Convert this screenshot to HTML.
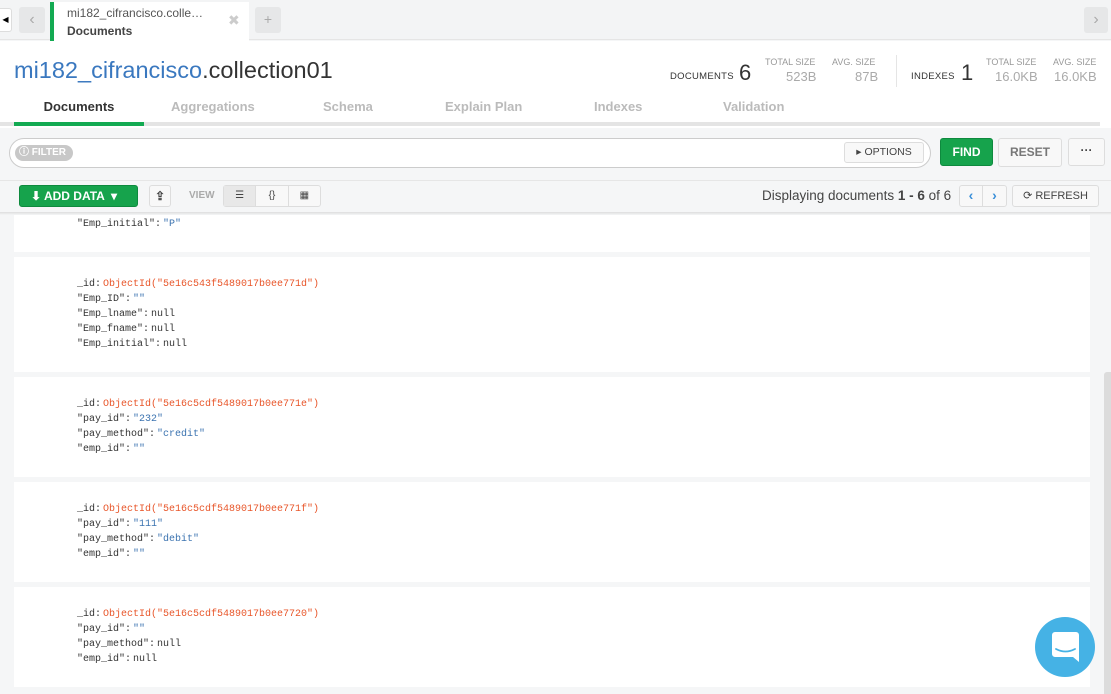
<!DOCTYPE html><html><head><style>
*{box-sizing:border-box;margin:0;padding:0}
body{width:1111px;height:694px;overflow:hidden;background:#f5f6f7;font-family:"Liberation Sans",sans-serif;position:relative}
.a{position:absolute}
.mono{font-family:"Liberation Mono",monospace;font-size:10px;color:#333;line-height:15px}
.mono i{font-style:normal;margin-right:2px}
.card{position:absolute;left:14px;width:1076px;background:#fff}
.s{color:#3b73b0}.o{color:#e8562a}
.btn{position:absolute;border:1px solid #ddd;border-radius:3px;background:#f8f8f8;font-size:12px;font-weight:bold;color:#777;text-align:center}
</style></head><body>
<div class="a" style="left:0;top:0;width:1111px;height:40px;background:#f3f4f5;border-bottom:1px solid #e5e5e5"></div>
<div class="a" style="left:0;top:8px;width:12px;height:24px;background:#fff;border:1px solid #ddd;border-left:none;border-radius:0 3px 3px 0;font-size:8px;line-height:22px;text-align:center">◀</div>
<div class="a" style="left:19px;top:7px;width:26px;height:26px;background:#e6e7e8;border-radius:3px;color:#aaa;text-align:center;line-height:26px;font-size:16px">‹</div>
<div class="a" style="left:50px;top:2px;width:199px;height:39px;background:#fff;border-left:4px solid #13aa52">
 <div class="a" style="left:13px;top:4px;font-size:12px;color:#555">mi182_cifrancisco.colle…</div>
 <div class="a" style="left:13px;top:22px;font-size:12px;font-weight:bold;color:#444">Documents</div>
 <div class="a" style="left:174px;top:10px;font-size:14px;color:#ccc">✖</div>
</div>
<div class="a" style="left:255px;top:7px;width:26px;height:26px;background:#e6e7e8;border-radius:3px;color:#aaa;text-align:center;line-height:24px;font-size:14px">+</div>
<div class="a" style="left:1084px;top:7px;width:24px;height:26px;background:#e6e7e8;border-radius:3px;color:#aaa;text-align:center;line-height:26px;font-size:16px">›</div>
<div class="a" style="left:0;top:41px;width:1111px;height:87px;background:#fff"></div>
<div class="a" style="left:14px;top:57px;font-size:23.5px;color:#333"><span style="color:#3a78bf">mi182_cifrancisco</span>.collection01</div>
<div class="a" style="left:670px;top:71px;font-size:9.5px;color:#333;letter-spacing:.3px">DOCUMENTS</div>
<div class="a" style="left:739px;top:60px;font-size:22px;color:#333">6</div>
<div class="a" style="left:765px;top:57px;font-size:9px;color:#999">TOTAL SIZE</div>
<div class="a" style="left:786px;top:69px;font-size:13px;color:#aaa">523B</div>
<div class="a" style="left:832px;top:57px;font-size:9px;color:#999">AVG. SIZE</div>
<div class="a" style="left:855px;top:69px;font-size:13px;color:#aaa">87B</div>
<div class="a" style="left:896px;top:55px;width:1px;height:32px;background:#e5e5e5"></div>
<div class="a" style="left:911px;top:71px;font-size:9.5px;color:#333;letter-spacing:.3px">INDEXES</div>
<div class="a" style="left:961px;top:60px;font-size:22px;color:#333">1</div>
<div class="a" style="left:986px;top:57px;font-size:9px;color:#999">TOTAL SIZE</div>
<div class="a" style="left:995px;top:69px;font-size:13px;color:#aaa">16.0KB</div>
<div class="a" style="left:1053px;top:57px;font-size:9px;color:#999">AVG. SIZE</div>
<div class="a" style="left:1054px;top:69px;font-size:13px;color:#aaa">16.0KB</div>
<div class="a" style="left:14px;top:99px;width:130px;text-align:center;font-size:13px;font-weight:bold;color:#333">Documents</div>
<div class="a" style="left:171px;top:99px;font-size:13px;font-weight:bold;color:#bbb">Aggregations</div>
<div class="a" style="left:323px;top:99px;font-size:13px;font-weight:bold;color:#bbb">Schema</div>
<div class="a" style="left:445px;top:99px;font-size:13px;font-weight:bold;color:#bbb">Explain Plan</div>
<div class="a" style="left:594px;top:99px;font-size:13px;font-weight:bold;color:#bbb">Indexes</div>
<div class="a" style="left:723px;top:99px;font-size:13px;font-weight:bold;color:#bbb">Validation</div>
<div class="a" style="left:0;top:122px;width:1100px;height:4px;background:#e4e4e4"></div>
<div class="a" style="left:14px;top:122px;width:130px;height:4px;background:#13aa52"></div>
<div class="a" style="left:9px;top:138px;width:922px;height:30px;background:#fff;border:1px solid #ccc;border-radius:15px"></div>
<div class="a" style="left:15px;top:145px;width:58px;height:16px;background:#c8c8c8;border-radius:8px;color:#fff;font-size:10px;font-weight:bold;line-height:16px;padding-left:4px">ⓘ FILTER</div>
<div class="a" style="left:844px;top:142px;width:80px;height:21px;background:#f8f8f8;border:1px solid #ddd;border-radius:3px;font-size:10.5px;color:#444;line-height:19px;text-align:center">▸ OPTIONS</div>
<div class="a" style="left:940px;top:138px;width:53px;height:28px;background:#16a34c;border:1px solid #0e8a3e;border-radius:3px;color:#fff;font-size:12px;font-weight:bold;text-align:center;line-height:26px">FIND</div>
<div class="btn" style="left:998px;top:138px;width:64px;height:29px;line-height:27px">RESET</div>
<div class="btn" style="left:1068px;top:138px;width:37px;height:28px;line-height:22px;color:#444">···</div>
<div class="a" style="left:0;top:180px;width:1111px;height:1px;background:#e6e6e6"></div>
<div class="a" style="left:19px;top:185px;width:119px;height:22px;background:#16a34c;border:1px solid #0e8a3e;border-radius:3px;color:#fff;font-size:12px;font-weight:bold;line-height:20px;padding-left:11px">⬇ ADD DATA &nbsp;▾</div>
<div class="btn" style="left:149px;top:185px;width:22px;height:22px;line-height:20px;color:#444">⇪</div>
<div class="a" style="left:189px;top:190px;font-size:10px;font-weight:bold;color:#aaa">VIEW</div>
<div class="a" style="left:223px;top:185px;width:98px;height:22px;border:1px solid #ddd;border-radius:3px;background:#f8f8f8;display:flex;font-size:10px;color:#444;text-align:center;line-height:20px">
 <div style="width:33px;background:#e8e8e8;border-right:1px solid #ddd">☰</div><div style="width:33px;border-right:1px solid #ddd">{}</div><div style="width:32px">▦</div></div>
<div class="a" style="left:762px;top:188px;font-size:13.5px;color:#444">Displaying documents <b>1 - 6</b> of 6</div>
<div class="a" style="left:959px;top:185px;width:48px;height:22px;border:1px solid #ddd;border-radius:3px;background:#f8f8f8;display:flex;color:#3a8fd8;font-weight:bold;font-size:14px;line-height:19px;text-align:center"><div style="width:24px;border-right:1px solid #ddd">‹</div><div style="width:24px">›</div></div>
<div class="btn" style="left:1012px;top:185px;width:87px;height:22px;line-height:20px;color:#444;font-size:11px;font-weight:normal">⟳ REFRESH</div>
<div class="a" style="left:0;top:212px;width:1111px;height:3px;background:linear-gradient(#ddd,#f5f6f7)"></div>
<div class="card" style="top:215px;height:37px"><div class="a mono" style="left:63px;top:2px"><i>"Emp_initial":</i><span class="s">"P"</span></div></div>
<div class="card" style="top:257px;height:115px"><div class="a mono" style="left:63px;top:20px"><i>_id:</i><span class="o">ObjectId("5e16c543f5489017b0ee771d")</span><br><i>"Emp_ID":</i><span class="s">""</span><br><i>"Emp_lname":</i>null<br><i>"Emp_fname":</i>null<br><i>"Emp_initial":</i>null</div></div>
<div class="card" style="top:377px;height:100px"><div class="a mono" style="left:63px;top:20px"><i>_id:</i><span class="o">ObjectId("5e16c5cdf5489017b0ee771e")</span><br><i>"pay_id":</i><span class="s">"232"</span><br><i>"pay_method":</i><span class="s">"credit"</span><br><i>"emp_id":</i><span class="s">""</span></div></div>
<div class="card" style="top:482px;height:100px"><div class="a mono" style="left:63px;top:20px"><i>_id:</i><span class="o">ObjectId("5e16c5cdf5489017b0ee771f")</span><br><i>"pay_id":</i><span class="s">"111"</span><br><i>"pay_method":</i><span class="s">"debit"</span><br><i>"emp_id":</i><span class="s">""</span></div></div>
<div class="card" style="top:587px;height:100px"><div class="a mono" style="left:63px;top:20px"><i>_id:</i><span class="o">ObjectId("5e16c5cdf5489017b0ee7720")</span><br><i>"pay_id":</i><span class="s">""</span><br><i>"pay_method":</i>null<br><i>"emp_id":</i>null</div></div>
<div class="a" style="left:1104px;top:372px;width:7px;height:322px;background:#dcdcdc;border-radius:3px 0 0 0"></div>
<div class="a" style="left:1035px;top:617px;width:60px;height:60px;border-radius:50%;background:#45b2e5">
 <svg class="a" style="left:17px;top:15px" width="27" height="30" viewBox="0 0 27 30"><path d="M3 0h21a3 3 0 0 1 3 3v27l-6-5H3a3 3 0 0 1-3-3V3a3 3 0 0 1 3-3z" fill="#fff"/><path d="M4 17q9.5 5 19 0" stroke="#45b2e5" stroke-width="1.8" fill="none" stroke-linecap="round"/></svg>
</div>
</body></html>
